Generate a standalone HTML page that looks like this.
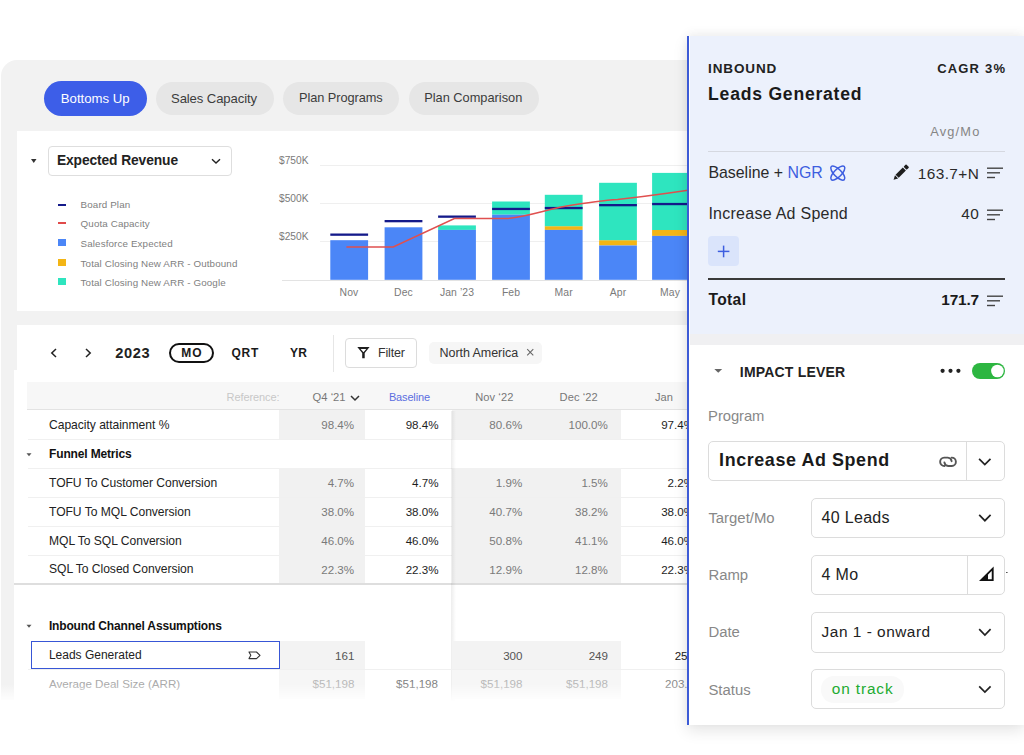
<!DOCTYPE html><html><head><meta charset="utf-8"><style>
*{margin:0;padding:0;box-sizing:border-box}
html,body{width:1024px;height:755px;overflow:hidden;background:#fff;font-family:"Liberation Sans",sans-serif}
.t{position:absolute;white-space:nowrap}
.b{position:absolute}
svg{position:absolute;overflow:visible}
</style></head><body><div class="b" style="left:1px;top:60px;width:1100px;height:640px;background:#f2f2f2;border-top-left-radius:16px;"></div>
<div class="b" style="left:44px;top:81px;width:103px;height:35px;background:#3d5ee8;border-radius:18px;"></div>
<div class="t" style="top:92.12px;font-size:13.2px;line-height:13.2px;font-weight:400;color:#fff;left:60.8px;">Bottoms Up</div>
<div class="b" style="left:155.6px;top:81.6px;width:118px;height:33px;background:#e6e6e6;border-radius:17px;"></div>
<div class="t" style="top:92.11px;font-size:13.1px;line-height:13.1px;font-weight:400;color:#3c3c3c;letter-spacing:-0.1px;left:171px;">Sales Capacity</div>
<div class="b" style="left:283.2px;top:81.6px;width:116px;height:33px;background:#e6e6e6;border-radius:17px;"></div>
<div class="t" style="top:92.06px;font-size:12.8px;line-height:12.8px;font-weight:400;color:#3c3c3c;letter-spacing:-0.08px;left:299px;">Plan Programs</div>
<div class="b" style="left:409.4px;top:81.6px;width:129.6px;height:33px;background:#e6e6e6;border-radius:17px;"></div>
<div class="t" style="top:92.06px;font-size:12.8px;line-height:12.8px;font-weight:400;color:#3c3c3c;left:424.2px;">Plan Comparison</div>
<div class="b" style="left:17px;top:131px;width:1000px;height:180px;background:#fff;"></div>
<svg style="left:0;top:0" width="1024" height="755"><path d="M31 159 L36.5 159 L33.75 163 Z" fill="#333"/></svg>
<div class="b" style="left:47.5px;top:146.3px;width:184.3px;height:30px;border:1px solid #dedede;border-radius:4px;background:#fff;"></div>
<div class="t" style="top:154.32px;font-size:13.8px;line-height:13.8px;font-weight:700;color:#222;letter-spacing:-0.1px;left:56.9px;">Expected Revenue</div>
<svg style="left:0;top:0" width="1024" height="755"><path d="M212 159.2 L216 163 L220 159.2" fill="none" stroke="#222" stroke-width="1.4"/></svg>
<div class="b" style="left:57.5px;top:204px;width:8px;height:2px;background:#141a8a;"></div>
<div class="t" style="top:199.70px;font-size:9.8px;line-height:9.8px;font-weight:400;color:#808080;letter-spacing:0.12px;left:80.6px;">Board Plan</div>
<div class="b" style="left:57.5px;top:222.0px;width:8px;height:2px;background:#e04a4a;"></div>
<div class="t" style="top:219.20px;font-size:9.8px;line-height:9.8px;font-weight:400;color:#808080;letter-spacing:0.12px;left:80.6px;">Quota Capacity</div>
<div class="b" style="left:57.5px;top:238.5px;width:8px;height:7px;background:#4b86f7;"></div>
<div class="t" style="top:238.70px;font-size:9.8px;line-height:9.8px;font-weight:400;color:#808080;letter-spacing:0.12px;left:80.6px;">Salesforce Expected</div>
<div class="b" style="left:57.5px;top:258.5px;width:8px;height:7px;background:#f3b515;"></div>
<div class="t" style="top:258.70px;font-size:9.8px;line-height:9.8px;font-weight:400;color:#808080;letter-spacing:0.12px;left:80.6px;">Total Closing New ARR - Outbound</div>
<div class="b" style="left:57.5px;top:277.8px;width:8px;height:7px;background:#2ee5bf;"></div>
<div class="t" style="top:278.00px;font-size:9.8px;line-height:9.8px;font-weight:400;color:#808080;letter-spacing:0.12px;left:80.6px;">Total Closing New ARR - Google</div>
<div class="t" style="top:156.36px;font-size:10.2px;line-height:10.2px;font-weight:400;color:#7a7a7a;left:279px;">$750K</div>
<div class="b" style="left:320px;top:165.1px;width:380px;height:1px;background:#efefef;"></div>
<div class="t" style="top:193.76px;font-size:10.2px;line-height:10.2px;font-weight:400;color:#7a7a7a;left:279px;">$500K</div>
<div class="b" style="left:320px;top:202.5px;width:380px;height:1px;background:#efefef;"></div>
<div class="t" style="top:232.16px;font-size:10.2px;line-height:10.2px;font-weight:400;color:#7a7a7a;left:279px;">$250K</div>
<div class="b" style="left:320px;top:240.9px;width:380px;height:1px;background:#efefef;"></div>
<div class="b" style="left:282px;top:279.5px;width:420px;height:1px;background:#e3e3e3;"></div>
<svg style="left:0;top:0" width="1024" height="755"><rect x="330.3" y="240.2" width="37.8" height="39.6" fill="#4b86f7"/><rect x="330.3" y="233.5" width="37.8" height="2.3" fill="#141a8a"/><rect x="384.6" y="227.3" width="37.8" height="52.5" fill="#4b86f7"/><rect x="384.6" y="220.0" width="37.8" height="2.3" fill="#141a8a"/><rect x="438.1" y="225.4" width="37.8" height="4.5" fill="#2ee5bf"/><rect x="438.1" y="229.9" width="37.8" height="49.9" fill="#4b86f7"/><rect x="438.1" y="215.5" width="37.8" height="2.3" fill="#141a8a"/><rect x="492.1" y="201.5" width="37.8" height="13.2" fill="#2ee5bf"/><rect x="492.1" y="214.7" width="37.8" height="65.1" fill="#4b86f7"/><rect x="492.1" y="207.8" width="37.8" height="2.3" fill="#141a8a"/><rect x="544.8" y="226.2" width="37.8" height="3.7" fill="#f3b515"/><rect x="544.8" y="194.8" width="37.8" height="31.4" fill="#2ee5bf"/><rect x="544.8" y="229.9" width="37.8" height="49.9" fill="#4b86f7"/><rect x="544.8" y="206.9" width="37.8" height="2.3" fill="#141a8a"/><rect x="599.1" y="240.2" width="37.8" height="5.3" fill="#f3b515"/><rect x="599.1" y="182.8" width="37.8" height="57.4" fill="#2ee5bf"/><rect x="599.1" y="245.5" width="37.8" height="34.3" fill="#4b86f7"/><rect x="599.1" y="204.0" width="37.8" height="2.3" fill="#141a8a"/><rect x="652.1" y="230.0" width="37.8" height="5.9" fill="#f3b515"/><rect x="652.1" y="172.9" width="37.8" height="57.1" fill="#2ee5bf"/><rect x="652.1" y="235.9" width="37.8" height="43.9" fill="#4b86f7"/><rect x="652.1" y="202.9" width="37.8" height="2.3" fill="#141a8a"/><path d="M346.4 247 L393.2 247 L454.4 218.5 L507.5 218.5 C530 216 545 210 564 206.5 C585 203 600 200.5 617.5 199.5 C640 197 655 195 669 193 L700 188.5" fill="none" stroke="#e0504f" stroke-width="1.6"/></svg>
<div class="t" style="top:288.49px;font-size:10.4px;line-height:10.4px;font-weight:400;color:#7a7a7a;letter-spacing:0.1px;left:349px;transform:translateX(-50%);">Nov</div>
<div class="t" style="top:288.49px;font-size:10.4px;line-height:10.4px;font-weight:400;color:#7a7a7a;letter-spacing:0.1px;left:403.5px;transform:translateX(-50%);">Dec</div>
<div class="t" style="top:288.49px;font-size:10.4px;line-height:10.4px;font-weight:400;color:#7a7a7a;letter-spacing:0.1px;left:457px;transform:translateX(-50%);">Jan &#8217;23</div>
<div class="t" style="top:288.49px;font-size:10.4px;line-height:10.4px;font-weight:400;color:#7a7a7a;letter-spacing:0.1px;left:511px;transform:translateX(-50%);">Feb</div>
<div class="t" style="top:288.49px;font-size:10.4px;line-height:10.4px;font-weight:400;color:#7a7a7a;letter-spacing:0.1px;left:563.7px;transform:translateX(-50%);">Mar</div>
<div class="t" style="top:288.49px;font-size:10.4px;line-height:10.4px;font-weight:400;color:#7a7a7a;letter-spacing:0.1px;left:618px;transform:translateX(-50%);">Apr</div>
<div class="t" style="top:288.49px;font-size:10.4px;line-height:10.4px;font-weight:400;color:#7a7a7a;letter-spacing:0.1px;left:670px;transform:translateX(-50%);">May</div>
<div class="b" style="left:16.5px;top:324.5px;width:1000px;height:380px;background:#fff;"></div>
<div class="b" style="left:14px;top:370px;width:10px;height:330px;background:#fff;"></div>
<svg style="left:0;top:0" width="1024" height="755"><path d="M56 349 L51.8 353 L56 357" fill="none" stroke="#222" stroke-width="1.5"/><path d="M86 349 L90.2 353 L86 357" fill="none" stroke="#222" stroke-width="1.5"/></svg>
<div class="t" style="top:346.04px;font-size:14.6px;line-height:14.6px;font-weight:700;color:#222;letter-spacing:0.64px;left:115.3px;">2023</div>
<div class="b" style="left:169.4px;top:342.8px;width:44.6px;height:20.2px;border:2px solid #111;border-radius:11px;"></div>
<div class="t" style="top:346.94px;font-size:12px;line-height:12px;font-weight:700;color:#1a1a1a;letter-spacing:1.2px;left:192px;transform:translateX(-50%);">MO</div>
<div class="t" style="top:346.94px;font-size:12px;line-height:12px;font-weight:700;color:#1a1a1a;letter-spacing:0.8px;left:245.3px;transform:translateX(-50%);">QRT</div>
<div class="t" style="top:346.94px;font-size:12px;line-height:12px;font-weight:700;color:#1a1a1a;letter-spacing:0.3px;left:298.7px;transform:translateX(-50%);">YR</div>
<div class="b" style="left:333px;top:334.5px;width:1px;height:37.5px;background:#e6e6e6;"></div>
<div class="b" style="left:344.6px;top:338px;width:72.7px;height:30px;border:1px solid #dcdcdc;border-radius:4px;"></div>
<svg style="left:0;top:0" width="1024" height="755"><path d="M357.3 347 L369.6 347 L364.7 353 L364.7 358.3 L362.2 358.3 L362.2 353 Z M360.6 349 L366.3 349 L363.45 352.3 Z" fill="#1e1e1e" fill-rule="evenodd"/></svg>
<div class="t" style="top:346.52px;font-size:12.5px;line-height:12.5px;font-weight:400;color:#333;letter-spacing:-0.2px;left:378.1px;">Filter</div>
<div class="b" style="left:429px;top:342px;width:112.5px;height:21.7px;background:#f6f6f6;border-radius:5px;"></div>
<div class="t" style="top:346.52px;font-size:12.5px;line-height:12.5px;font-weight:400;color:#333;letter-spacing:-0.05px;left:439.5px;">North America</div>
<svg style="left:0;top:0" width="1024" height="755"><path d="M527.2 349.2 L533.3 355.3 M533.3 349.2 L527.2 355.3" stroke="#666" stroke-width="1.05"/></svg>
<div class="b" style="left:27.2px;top:382px;width:680px;height:28.2px;background:#f7f7f7;border-bottom:1px solid #e3e3e3;"></div>
<div class="t" style="top:392.19px;font-size:11px;line-height:11px;font-weight:400;color:#c8c8c8;letter-spacing:-0.1px;right:744.60px;">Reference:</div>
<div class="t" style="top:392.02px;font-size:11.2px;line-height:11.2px;font-weight:400;color:#777;left:312.6px;">Q4 &#8216;21</div>
<svg style="left:0;top:0" width="1024" height="755"><path d="M351 396 L355 400 L359 396" fill="none" stroke="#333" stroke-width="1.5"/></svg>
<div class="t" style="top:392.19px;font-size:11px;line-height:11px;font-weight:400;color:#5b6ee0;letter-spacing:-0.15px;left:409.4px;transform:translateX(-50%);">Baseline</div>
<div class="t" style="top:392.10px;font-size:11.1px;line-height:11.1px;font-weight:400;color:#777;letter-spacing:0.1px;left:494.3px;transform:translateX(-50%);">Nov &#8216;22</div>
<div class="t" style="top:392.10px;font-size:11.1px;line-height:11.1px;font-weight:400;color:#777;letter-spacing:0.1px;left:578.7px;transform:translateX(-50%);">Dec &#8216;22</div>
<div class="t" style="top:392.10px;font-size:11.1px;line-height:11.1px;font-weight:400;color:#777;left:664px;transform:translateX(-50%);">Jan</div>
<div class="b" style="left:278.8px;top:410.2px;width:86.30000000000001px;height:29.400000000000034px;background:#f1f1f1;"></div>
<div class="b" style="left:451.5px;top:410.2px;width:83.70000000000005px;height:29.400000000000034px;background:#f1f1f1;"></div>
<div class="b" style="left:535.2px;top:410.2px;width:85.59999999999991px;height:29.400000000000034px;background:#f1f1f1;"></div>
<div class="b" style="left:27.8px;top:439.1px;width:690px;height:1px;background:#f0f0f0;"></div>
<div class="t" style="top:418.77px;font-size:12.1px;line-height:12.1px;font-weight:400;color:#222;letter-spacing:-0.03px;left:49px;">Capacity attainment %</div>
<div class="t" style="top:419.19px;font-size:11.6px;line-height:11.6px;font-weight:400;color:#7a7a7a;right:669.90px;">98.4%</div>
<div class="t" style="top:419.19px;font-size:11.6px;line-height:11.6px;font-weight:400;color:#1e1e1e;right:585.50px;">98.4%</div>
<div class="t" style="top:419.19px;font-size:11.6px;line-height:11.6px;font-weight:400;color:#7a7a7a;right:501.80px;">80.6%</div>
<div class="t" style="top:419.19px;font-size:11.6px;line-height:11.6px;font-weight:400;color:#7a7a7a;right:416.20px;">100.0%</div>
<div class="t" style="top:419.19px;font-size:11.6px;line-height:11.6px;font-weight:400;color:#1e1e1e;right:330.00px;">97.4%</div>
<div class="b" style="left:27.8px;top:467.8px;width:690px;height:1px;background:#f0f0f0;"></div>
<svg style="left:0;top:0" width="1024" height="755"><path d="M26.5 453.2 L31.5 453.2 L29 456.2 Z" fill="#555"/></svg>
<div class="t" style="top:447.81px;font-size:12px;line-height:12px;font-weight:700;color:#111;letter-spacing:-0.16px;left:49.1px;">Funnel Metrics</div>
<div class="b" style="left:278.8px;top:468.3px;width:86.30000000000001px;height:29.19999999999999px;background:#f1f1f1;"></div>
<div class="b" style="left:451.5px;top:468.3px;width:83.70000000000005px;height:29.19999999999999px;background:#f1f1f1;"></div>
<div class="b" style="left:535.2px;top:468.3px;width:85.59999999999991px;height:29.19999999999999px;background:#f1f1f1;"></div>
<div class="b" style="left:27.8px;top:497.0px;width:690px;height:1px;background:#f0f0f0;"></div>
<div class="t" style="top:476.74px;font-size:12.1px;line-height:12.1px;font-weight:400;color:#222;letter-spacing:-0.03px;left:49px;">TOFU To Customer Conversion</div>
<div class="t" style="top:477.17px;font-size:11.6px;line-height:11.6px;font-weight:400;color:#7a7a7a;right:669.90px;">4.7%</div>
<div class="t" style="top:477.17px;font-size:11.6px;line-height:11.6px;font-weight:400;color:#1e1e1e;right:585.50px;">4.7%</div>
<div class="t" style="top:477.17px;font-size:11.6px;line-height:11.6px;font-weight:400;color:#7a7a7a;right:501.80px;">1.9%</div>
<div class="t" style="top:477.17px;font-size:11.6px;line-height:11.6px;font-weight:400;color:#7a7a7a;right:416.20px;">1.5%</div>
<div class="t" style="top:477.17px;font-size:11.6px;line-height:11.6px;font-weight:400;color:#1e1e1e;right:330.00px;">2.2%</div>
<div class="b" style="left:278.8px;top:497.5px;width:86.30000000000001px;height:28.799999999999955px;background:#f1f1f1;"></div>
<div class="b" style="left:451.5px;top:497.5px;width:83.70000000000005px;height:28.799999999999955px;background:#f1f1f1;"></div>
<div class="b" style="left:535.2px;top:497.5px;width:85.59999999999991px;height:28.799999999999955px;background:#f1f1f1;"></div>
<div class="b" style="left:27.8px;top:525.8px;width:690px;height:1px;background:#f0f0f0;"></div>
<div class="t" style="top:505.69px;font-size:12.1px;line-height:12.1px;font-weight:400;color:#222;letter-spacing:-0.03px;left:49px;">TOFU To MQL Conversion</div>
<div class="t" style="top:506.11px;font-size:11.6px;line-height:11.6px;font-weight:400;color:#7a7a7a;right:669.90px;">38.0%</div>
<div class="t" style="top:506.11px;font-size:11.6px;line-height:11.6px;font-weight:400;color:#1e1e1e;right:585.50px;">38.0%</div>
<div class="t" style="top:506.11px;font-size:11.6px;line-height:11.6px;font-weight:400;color:#7a7a7a;right:501.80px;">40.7%</div>
<div class="t" style="top:506.11px;font-size:11.6px;line-height:11.6px;font-weight:400;color:#7a7a7a;right:416.20px;">38.2%</div>
<div class="t" style="top:506.11px;font-size:11.6px;line-height:11.6px;font-weight:400;color:#1e1e1e;right:330.00px;">38.0%</div>
<div class="b" style="left:278.8px;top:526.3px;width:86.30000000000001px;height:28.90000000000009px;background:#f1f1f1;"></div>
<div class="b" style="left:451.5px;top:526.3px;width:83.70000000000005px;height:28.90000000000009px;background:#f1f1f1;"></div>
<div class="b" style="left:535.2px;top:526.3px;width:85.59999999999991px;height:28.90000000000009px;background:#f1f1f1;"></div>
<div class="b" style="left:27.8px;top:554.7px;width:690px;height:1px;background:#f0f0f0;"></div>
<div class="t" style="top:534.55px;font-size:12.1px;line-height:12.1px;font-weight:400;color:#222;letter-spacing:-0.03px;left:49px;">MQL To SQL Conversion</div>
<div class="t" style="top:534.97px;font-size:11.6px;line-height:11.6px;font-weight:400;color:#7a7a7a;right:669.90px;">46.0%</div>
<div class="t" style="top:534.97px;font-size:11.6px;line-height:11.6px;font-weight:400;color:#1e1e1e;right:585.50px;">46.0%</div>
<div class="t" style="top:534.97px;font-size:11.6px;line-height:11.6px;font-weight:400;color:#7a7a7a;right:501.80px;">50.8%</div>
<div class="t" style="top:534.97px;font-size:11.6px;line-height:11.6px;font-weight:400;color:#7a7a7a;right:416.20px;">41.1%</div>
<div class="t" style="top:534.97px;font-size:11.6px;line-height:11.6px;font-weight:400;color:#1e1e1e;right:330.00px;">46.0%</div>
<div class="b" style="left:278.8px;top:555.2px;width:86.30000000000001px;height:28.5px;background:#f1f1f1;"></div>
<div class="b" style="left:451.5px;top:555.2px;width:83.70000000000005px;height:28.5px;background:#f1f1f1;"></div>
<div class="b" style="left:535.2px;top:555.2px;width:85.59999999999991px;height:28.5px;background:#f1f1f1;"></div>
<div class="b" style="left:27.8px;top:583.2px;width:690px;height:1px;background:#f0f0f0;"></div>
<div class="t" style="top:563.19px;font-size:12.1px;line-height:12.1px;font-weight:400;color:#222;letter-spacing:-0.03px;left:49px;">SQL To Closed Conversion</div>
<div class="t" style="top:563.62px;font-size:11.6px;line-height:11.6px;font-weight:400;color:#7a7a7a;right:669.90px;">22.3%</div>
<div class="t" style="top:563.62px;font-size:11.6px;line-height:11.6px;font-weight:400;color:#1e1e1e;right:585.50px;">22.3%</div>
<div class="t" style="top:563.62px;font-size:11.6px;line-height:11.6px;font-weight:400;color:#7a7a7a;right:501.80px;">12.9%</div>
<div class="t" style="top:563.62px;font-size:11.6px;line-height:11.6px;font-weight:400;color:#7a7a7a;right:416.20px;">12.8%</div>
<div class="t" style="top:563.62px;font-size:11.6px;line-height:11.6px;font-weight:400;color:#1e1e1e;right:330.00px;">22.3%</div>
<div class="b" style="left:14px;top:583px;width:700px;height:1.5px;background:#dedede;"></div>
<div class="b" style="left:450.5px;top:410.5px;width:5px;height:290px;background:linear-gradient(90deg,rgba(0,0,0,0.07),rgba(0,0,0,0));"></div>
<svg style="left:0;top:0" width="1024" height="755"><path d="M26.5 624.8 L31.5 624.8 L29 627.8 Z" fill="#555"/></svg>
<div class="t" style="top:619.84px;font-size:12px;line-height:12px;font-weight:700;color:#111;letter-spacing:-0.15px;left:48.9px;">Inbound Channel Assumptions</div>
<div class="b" style="left:278.8px;top:641px;width:86.3px;height:28px;background:#f3f3f3;"></div>
<div class="b" style="left:451.5px;top:641px;width:169.3px;height:28px;background:#f3f3f3;"></div>
<div class="b" style="left:278.8px;top:669px;width:86.3px;height:30px;background:#f6f6f6;"></div>
<div class="b" style="left:451.5px;top:669px;width:169.3px;height:30px;background:#f6f6f6;"></div>
<div class="b" style="left:27.8px;top:668.5px;width:690px;height:1px;background:#f0f0f0;"></div>
<div class="b" style="left:31.4px;top:641px;width:248.4px;height:27.6px;border:1.6px solid #3856d6;background:#fff;"></div>
<div class="t" style="top:649.24px;font-size:12.0px;line-height:12.0px;font-weight:400;color:#222;left:48.9px;">Leads Generated</div>
<svg style="left:0;top:0" width="1024" height="755"><path d="M249 652 L256.5 652 L260 655.3 L256.5 658.6 L249 658.6 L250.8 655.3 Z" fill="none" stroke="#333" stroke-width="1.1" stroke-linejoin="round"/></svg>
<div class="t" style="top:649.58px;font-size:11.6px;line-height:11.6px;font-weight:400;color:#555;right:669.60px;">161</div>
<div class="t" style="top:649.58px;font-size:11.6px;line-height:11.6px;font-weight:400;color:#555;right:501.50px;">300</div>
<div class="t" style="top:649.58px;font-size:11.6px;line-height:11.6px;font-weight:400;color:#555;right:416.00px;">249</div>
<div class="t" style="top:649.58px;font-size:11.6px;line-height:11.6px;font-weight:400;color:#222;right:330.00px;">251</div>
<div class="t" style="top:677.98px;font-size:11.6px;line-height:11.6px;font-weight:400;color:#a8a8a8;left:48.9px;">Average Deal Size (ARR)</div>
<div class="t" style="top:677.98px;font-size:11.6px;line-height:11.6px;font-weight:400;color:#b8b8b8;right:669.60px;">$51,198</div>
<div class="t" style="top:677.98px;font-size:11.6px;line-height:11.6px;font-weight:400;color:#808080;right:586.00px;">$51,198</div>
<div class="t" style="top:677.98px;font-size:11.6px;line-height:11.6px;font-weight:400;color:#b8b8b8;right:501.50px;">$51,198</div>
<div class="t" style="top:677.98px;font-size:11.6px;line-height:11.6px;font-weight:400;color:#b8b8b8;right:416.00px;">$51,198</div>
<div class="t" style="top:677.98px;font-size:11.6px;line-height:11.6px;font-weight:400;color:#8a8a8a;right:330.00px;">203.4</div>
<div class="b" style="left:0px;top:684px;width:700px;height:18px;background:linear-gradient(180deg,rgba(255,255,255,0) 0%,#fff 100%);"></div>
<div class="b" style="left:0px;top:702px;width:700px;height:60px;background:#fff;"></div>
<div class="b" style="left:687px;top:36px;width:337px;height:689px;background:#fff;box-shadow:0 6px 14px rgba(0,0,0,0.10),0 -3px 10px rgba(0,0,0,0.05);"></div>
<div class="b" style="left:690px;top:36px;width:334px;height:298px;background:#ecf1fc;"></div>
<div class="b" style="left:690px;top:334px;width:334px;height:11px;background:#f0f0f2;"></div>
<div class="b" style="left:686.9px;top:36.3px;width:2.5px;height:689px;background:#3d5bd6;"></div>
<div class="t" style="top:61.67px;font-size:13.5px;line-height:13.5px;font-weight:700;color:#222;letter-spacing:0.86px;left:708.1px;">INBOUND</div>
<div class="t" style="top:62.09px;font-size:13px;line-height:13px;font-weight:700;color:#222;letter-spacing:1.2px;right:17.80px;">CAGR 3%</div>
<div class="t" style="top:86.40px;font-size:17.6px;line-height:17.6px;font-weight:700;color:#1a1a1a;letter-spacing:0.76px;left:708.1px;">Leads Generated</div>
<div class="t" style="top:126.16px;font-size:12.8px;line-height:12.8px;font-weight:400;color:#858585;letter-spacing:1.2px;right:43.50px;">Avg/Mo</div>
<div class="b" style="left:708.4px;top:151px;width:297px;height:1px;background:#d5d8e0;"></div>
<div class="t" style="top:164.64px;font-size:15.9px;line-height:15.9px;font-weight:400;color:#2a2a2a;left:708.4px;">Baseline + <span style='color:#3d5ee0'>NGR</span></div>
<svg style="left:0;top:0" width="1024" height="755"><g fill="none" stroke="#3d5ee0" stroke-width="1.5"><ellipse cx="837.8" cy="173.1" rx="9.2" ry="3.7" transform="rotate(45 837.8 173.1)"/><ellipse cx="837.8" cy="173.1" rx="9.2" ry="3.7" transform="rotate(-45 837.8 173.1)"/></g></svg>
<svg style="left:0;top:0" width="1024" height="755"><g transform="translate(893.6 179.8) rotate(-45)" fill="#1e1e1e"><path d="M0 0 L4.2 -2.2 L4.2 2.2 Z"/><rect x="5" y="-2.2" width="10.2" height="4.4"/><rect x="16.2" y="-2.2" width="3.6" height="4.4" rx="0.8"/></g></svg>
<div class="t" style="top:165.56px;font-size:15.4px;line-height:15.4px;font-weight:400;color:#2a2a2a;letter-spacing:0.4px;right:44.80px;">163.7+N</div>
<svg style="left:0;top:0" width="1024" height="755"><g stroke="#444" stroke-width="1.4"><path d="M987 168.2 H1003"/><path d="M987 172.8 H1000"/><path d="M987 177.5 H995"/></g></svg>
<div class="t" style="top:206.35px;font-size:16px;line-height:16px;font-weight:400;color:#2a2a2a;letter-spacing:0.26px;left:708.4px;">Increase Ad Spend</div>
<div class="t" style="top:206.36px;font-size:15.4px;line-height:15.4px;font-weight:400;color:#2a2a2a;letter-spacing:0.4px;right:44.80px;">40</div>
<svg style="left:0;top:0" width="1024" height="755"><g stroke="#444" stroke-width="1.4"><path d="M987 210.2 H1003"/><path d="M987 214.8 H1000"/><path d="M987 219.5 H995"/></g></svg>
<div class="b" style="left:708.4px;top:236px;width:30.5px;height:30.4px;background:#dae4fb;border-radius:4px;"></div>
<svg style="left:0;top:0" width="1024" height="755"><g stroke="#3d5ee0" stroke-width="1.5"><path d="M723.6 245.6 V257.3"/><path d="M717.8 251.4 H729.4"/></g></svg>
<div class="b" style="left:708.4px;top:278px;width:297px;height:1.8px;background:#3a3a3a;"></div>
<div class="t" style="top:292.49px;font-size:15.6px;line-height:15.6px;font-weight:700;color:#1a1a1a;letter-spacing:0.37px;left:708.4px;">Total</div>
<div class="t" style="top:292.46px;font-size:15.4px;line-height:15.4px;font-weight:700;color:#1a1a1a;letter-spacing:-0.2px;right:45.20px;">171.7</div>
<svg style="left:0;top:0" width="1024" height="755"><g stroke="#444" stroke-width="1.4"><path d="M987 296.2 H1003"/><path d="M987 300.8 H1000"/><path d="M987 305.5 H995"/></g></svg>
<svg style="left:0;top:0" width="1024" height="755"><path d="M714.3 369 L722.2 369 L718.25 372.8 Z" fill="#666"/></svg>
<div class="t" style="top:364.75px;font-size:14px;line-height:14px;font-weight:700;color:#222;letter-spacing:0.2px;left:739.8px;">IMPACT LEVER</div>
<svg style="left:0;top:0" width="1024" height="755"><g fill="#222"><circle cx="942.6" cy="370.8" r="2.1"/><circle cx="950.5" cy="370.8" r="2.1"/><circle cx="958.4" cy="370.8" r="2.1"/></g></svg>
<div class="b" style="left:972px;top:363.3px;width:33.4px;height:15.4px;background:#2db641;border-radius:8px;"></div>
<svg style="left:0;top:0" width="1024" height="755"><circle cx="997.4" cy="371" r="6.3" fill="#fff"/></svg>
<div class="t" style="top:409.07px;font-size:14.8px;line-height:14.8px;font-weight:400;color:#888;letter-spacing:-0.08px;left:708.1px;">Program</div>
<div class="b" style="left:708.4px;top:440.5px;width:297px;height:40px;border:1px solid #dcdcdc;border-radius:5px;"></div>
<div class="b" style="left:965.8px;top:441px;width:1px;height:39.5px;background:#dcdcdc;"></div>
<div class="t" style="top:452.24px;font-size:17.9px;line-height:17.9px;font-weight:700;color:#1a1a1a;letter-spacing:0.6px;left:719.1px;">Increase Ad Spend</div>
<svg style="left:0;top:0" width="1024" height="755"><g fill="none" stroke="#555" stroke-width="1.9" stroke-linecap="round"><path d="M944.5 466 A4.2 4.2 0 0 1 944.2 457.6 L947.8 457.6 A4.2 4.2 0 0 1 951.6 461.2"/><path d="M951.6 457.6 A4.2 4.2 0 0 1 951.8 466 L948.2 466 A4.2 4.2 0 0 1 944.4 462.4"/></g></svg>
<svg style="left:0;top:0" width="1024" height="755"><path d="M979.1 458.8 L984.8 464.6 L990.5 458.8" fill="none" stroke="#222" stroke-width="1.7"/></svg>
<div class="b" style="left:811.1px;top:498px;width:193.9px;height:39.799999999999955px;border:1px solid #dcdcdc;border-radius:5px;"></div>
<div class="t" style="top:511.38px;font-size:14.9px;line-height:14.9px;font-weight:400;color:#888;left:708.4px;">Target/Mo</div>
<div class="t" style="top:509.95px;font-size:16px;line-height:16px;font-weight:400;color:#222;letter-spacing:0.3px;left:821.6px;">40 Leads</div>
<svg style="left:0;top:0" width="1024" height="755"><path d="M979.2 514.9 L984.9 520.7 L990.6 514.9" fill="none" stroke="#222" stroke-width="1.7"/></svg>
<div class="b" style="left:811.1px;top:555px;width:193.9px;height:40px;border:1px solid #dcdcdc;border-radius:5px;"></div>
<div class="t" style="top:568.38px;font-size:14.9px;line-height:14.9px;font-weight:400;color:#888;left:708.4px;">Ramp</div>
<div class="t" style="top:566.95px;font-size:16px;line-height:16px;font-weight:400;color:#222;letter-spacing:0.3px;left:821.6px;">4 Mo</div>
<div class="b" style="left:967.3px;top:555.5px;width:1px;height:39px;background:#dcdcdc;"></div>
<svg style="left:0;top:0" width="1024" height="755"><path d="M981.3 580.1 L992.7 580.1 L992.7 568.7 Z" fill="none" stroke="#111" stroke-width="1.9" stroke-linejoin="miter"/><path d="M981.3 580.1 L988 580.1 L988 573.4 Z" fill="#111"/><rect x="1006" y="572" width="1.6" height="1" fill="#555"/></svg>
<div class="b" style="left:811.1px;top:612px;width:193.9px;height:40.5px;border:1px solid #dcdcdc;border-radius:5px;"></div>
<div class="t" style="top:625.38px;font-size:14.9px;line-height:14.9px;font-weight:400;color:#888;left:708.4px;">Date</div>
<div class="t" style="top:624.46px;font-size:15.4px;line-height:15.4px;font-weight:400;color:#222;letter-spacing:0.52px;left:821.6px;">Jan 1 - onward</div>
<svg style="left:0;top:0" width="1024" height="755"><path d="M979.2 629.2 L984.9 635.0 L990.6 629.2" fill="none" stroke="#222" stroke-width="1.7"/></svg>
<div class="b" style="left:811.1px;top:669.2px;width:193.9px;height:40.19999999999993px;border:1px solid #dcdcdc;border-radius:5px;"></div>
<div class="t" style="top:682.58px;font-size:14.9px;line-height:14.9px;font-weight:400;color:#888;left:708.4px;">Status</div>
<svg style="left:0;top:0" width="1024" height="755"><path d="M979.2 686.3 L984.9 692.1 L990.6 686.3" fill="none" stroke="#222" stroke-width="1.7"/></svg>
<div class="b" style="left:821px;top:676px;width:82.5px;height:27px;background:#f9f9f9;border-radius:13px;"></div>
<div class="t" style="top:680.56px;font-size:15.4px;line-height:15.4px;font-weight:400;color:#22ab30;letter-spacing:0.87px;left:831.8px;">on track</div></body></html>
